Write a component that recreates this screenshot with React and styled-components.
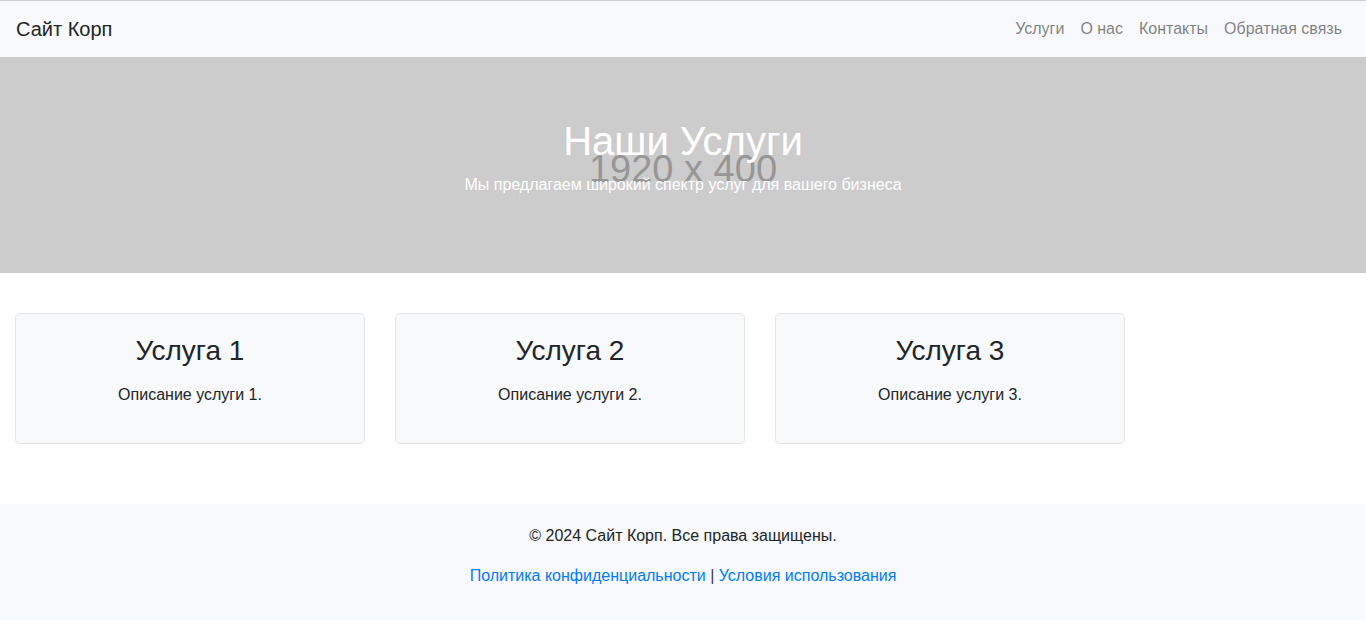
import React from "react";
import styled, { createGlobalStyle } from "styled-components";

const GlobalStyle = createGlobalStyle`
    * {
        box-sizing: border-box;
    }
    body {
        margin: 0;
        font-family: "Liberation Sans", Arial, sans-serif;
        font-size: 16px;
        line-height: 1.5;
        color: #212529;
        background: #fff;
    }
`;

const Page = styled.div`
    border-top: 1px solid #cfcfcf;
    min-height: 619px;
    display: flex;
    flex-direction: column;
`;

const NavBar = styled.nav`
    height: 56px;
    background-color: #f8f9fa;
    display: flex;
    align-items: center;
    justify-content: space-between;
    padding: 0 16px;
`;

const Brand = styled.a`
    font-size: 20px;
    color: #212529;
    text-decoration: none;
`;

const NavList = styled.ul`
    display: flex;
    list-style: none;
    margin: 0;
    padding: 0;
`;

const NavLink = styled.li`
    padding: 0 8px;
    color: rgba(0, 0, 0, 0.5);
`;

const Hero = styled.section`
    position: relative;
    height: 216px;
    background-color: #cccccc;
    display: flex;
    flex-direction: column;
    align-items: center;
    justify-content: center;
    text-align: center;
`;

/* the placeholder image label sits under the text */
const Placeholder = styled.span`
    position: absolute;
    left: 0;
    right: 0;
    top: 50%;
    transform: translateY(-50%);
    font-size: 38px;
    line-height: 1;
    color: #969696;
    margin-top: 4px;
`;

const HeroTitle = styled.h1`
    position: relative;
    margin: 0 0 8px;
    font-size: 40px;
    font-weight: 400;
    line-height: 1.2;
    color: #fff;
`;

const HeroText = styled.p`
    position: relative;
    margin: 0 0 16px;
    color: #fff;
`;

const Services = styled.section`
    display: flex;
    gap: 30px;
    padding: 40px 15px 40px;
`;

const Card = styled.div`
    width: 350px;
    margin-bottom: 20px;
    padding: 20px 20px 21px;
    background-color: #f8f9fa;
    border: 1px solid #e3e5e8;
    border-radius: 5px;
    text-align: center;
`;

const CardTitle = styled.h3`
    margin: 0 0 15px;
    font-size: 28px;
    font-weight: 400;
    line-height: 1.2;
`;

const CardText = styled.p`
    margin: 0 0 15px;
`;

const Footer = styled.footer`
    flex: 1;
    background-color: #f8f9fa;
    padding: 20px 0;
    text-align: center;
`;

const FooterText = styled.p`
    margin: 0 0 16px;
`;

const FooterLink = styled.a`
    color: #007bff;
    text-decoration: none;
`;

const Sep = styled.span`
    color: #45306f;
`;

const services = [1, 2, 3];

const App = () => {
    return (
        <>
            <GlobalStyle />
            <Page>
                <NavBar>
                    <Brand href="#">Сайт Корп</Brand>
                    <NavList>
                        <NavLink>Услуги</NavLink>
                        <NavLink>О нас</NavLink>
                        <NavLink>Контакты</NavLink>
                        <NavLink>Обратная связь</NavLink>
                    </NavList>
                </NavBar>
                <Hero>
                    <Placeholder>1920 x 400</Placeholder>
                    <HeroTitle>Наши Услуги</HeroTitle>
                    <HeroText>Мы предлагаем широкий спектр услуг для вашего бизнеса</HeroText>
                </Hero>
                <Services>
                    {services.map((n) => (
                        <Card key={n}>
                            <CardTitle>Услуга {n}</CardTitle>
                            <CardText>Описание услуги {n}.</CardText>
                        </Card>
                    ))}
                </Services>
                <Footer>
                    <FooterText>© 2024 Сайт Корп. Все права защищены.</FooterText>
                    <FooterText>
                        <FooterLink href="#">Политика конфиденциальности</FooterLink>
                        <Sep> | </Sep>
                        <FooterLink href="#">Условия использования</FooterLink>
                    </FooterText>
                </Footer>
            </Page>
        </>
    );
};

export default App;
